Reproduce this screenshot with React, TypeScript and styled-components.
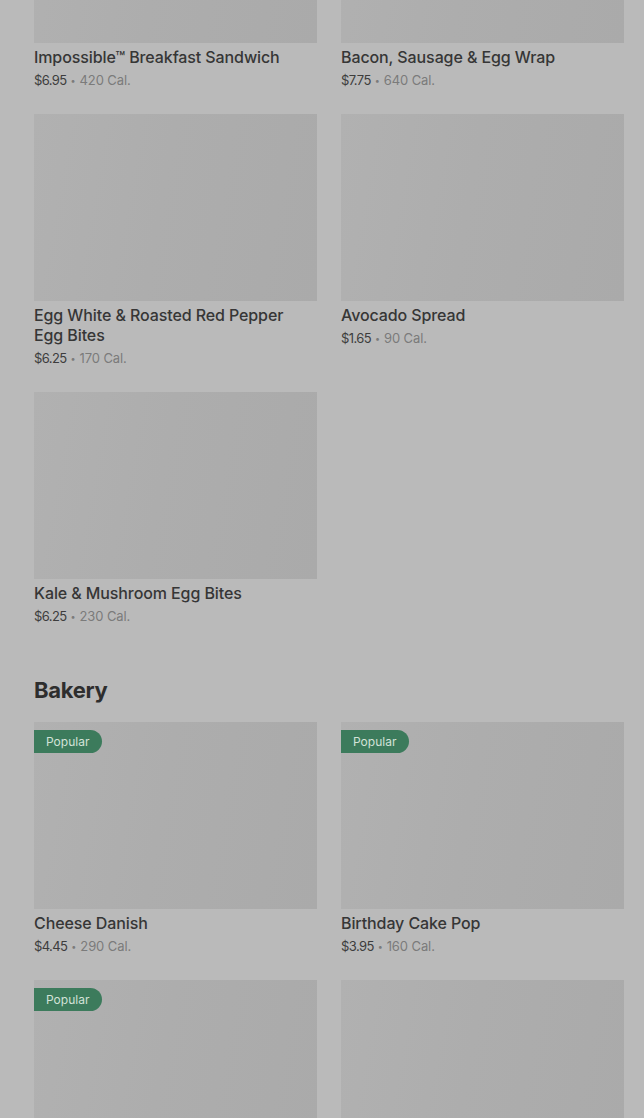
import React from "react";
import styled, { createGlobalStyle } from "styled-components";

const GlobalStyle = createGlobalStyle`
  html, body {
    margin: 0;
    padding: 0;
    background: #bababa;
    font-family: Inter, "Noto Sans", sans-serif;
    overflow: hidden;
  }
`;

const Page = styled.div`
  height: 1118px;
  overflow: hidden;
  padding: 0 20px 0 34px;
`;

const Scroller = styled.div`
  margin-top: -144px;
`;

const Section = styled.section`
  & + & {
    margin-top: 50px;
  }
`;

const SectionTitle = styled.h2`
  margin: 0 0 18px;
  font-size: 22px;
  line-height: 28px;
  font-weight: 700;
  color: #2e2e2e;
  letter-spacing: -0.3px;
`;

const Grid = styled.div`
  display: grid;
  grid-template-columns: 1fr 1fr;
  column-gap: 24px;
  row-gap: 24px;
  align-items: start;
`;

const Card = styled.div`
  display: flex;
  flex-direction: column;
`;

const Thumb = styled.div`
  position: relative;
  height: 187px;
  background: linear-gradient(100deg, #b1b1b1 0%, #adadad 45%, #aaaaaa 100%);
`;

const Badge = styled.span`
  position: absolute;
  top: 8px;
  left: 0;
  height: 23px;
  padding: 0 13px 0 12px;
  display: flex;
  align-items: center;
  background: #3c7b5c;
  color: #d3e2d8;
  font-size: 12px;
  border-radius: 0 12px 12px 0;
`;

const Name = styled.div`
  margin-top: 4px;
  padding-right: 22px;
  font-size: 16px;
  line-height: 20px;
  font-weight: 500;
  color: #363636;
  letter-spacing: -0.1px;
`;

const Meta = styled.div`
  margin-top: 3px;
  height: 20px;
  font-size: 13px;
  line-height: 20px;
  color: #7b7b7b;
  letter-spacing: -0.1px;
`;

const Price = styled.span`
  color: #3d3d3d;
  letter-spacing: -0.6px;
`;

const Dot = styled.span`
  display: inline-block;
  margin: 0 4px;
  font-size: 9px;
  line-height: 10px;
  transform: translateY(-1px);
`;

type Item = { name: string; price: string; cal: string; popular?: boolean };

const breakfast: Item[] = [
  { name: "Impossible™ Breakfast Sandwich", price: "$6.95", cal: "420" },
  { name: "Bacon, Sausage & Egg Wrap", price: "$7.75", cal: "640" },
  { name: "Egg White & Roasted Red Pepper Egg Bites", price: "$6.25", cal: "170" },
  { name: "Avocado Spread", price: "$1.65", cal: "90" },
  { name: "Kale & Mushroom Egg Bites", price: "$6.25", cal: "230" },
];

const bakery: Item[] = [
  { name: "Cheese Danish", price: "$4.45", cal: "290", popular: true },
  { name: "Birthday Cake Pop", price: "$3.95", cal: "160", popular: true },
  { name: "", price: "", cal: "", popular: true },
  { name: "", price: "", cal: "" },
];

const MenuCard = ({ item }: { item: Item }) => (
  <Card>
    <Thumb>{item.popular && <Badge>Popular</Badge>}</Thumb>
    {item.name && <Name>{item.name}</Name>}
    {item.price && (
      <Meta>
        <Price>{item.price}</Price>
        <Dot>•</Dot>
        {item.cal} Cal.
      </Meta>
    )}
  </Card>
);

const App = () => (
  <Page>
    <GlobalStyle />
    <Scroller>
      <Section>
        <Grid>
          {breakfast.map((it) => (
            <MenuCard key={it.name} item={it} />
          ))}
        </Grid>
      </Section>
      <Section>
        <SectionTitle>Bakery</SectionTitle>
        <Grid>
          {bakery.map((it, i) => (
            <MenuCard key={i} item={it} />
          ))}
        </Grid>
      </Section>
    </Scroller>
  </Page>
);

export default App;
